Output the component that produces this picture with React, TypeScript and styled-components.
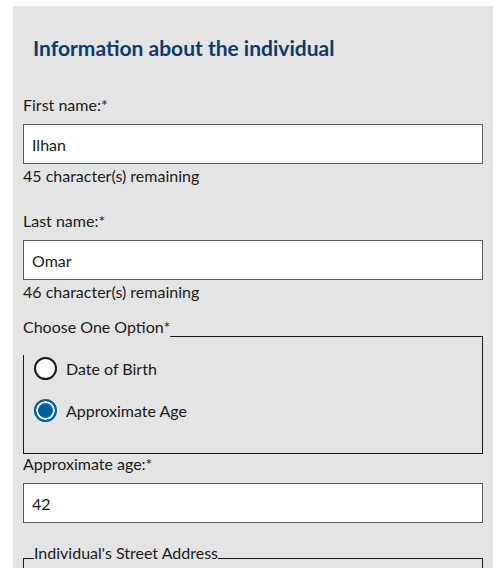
import React from "react";
import styled, { createGlobalStyle } from "styled-components";

const GlobalStyle = createGlobalStyle`
  html, body {
    margin: 0;
    padding: 0;
    background: #ffffff;
    overflow: hidden;
  }
  body {
    font-family: Lato, "Noto Sans", sans-serif;
    color: #1b1b1b;
  }
`;

const Panel = styled.div`
  margin: 6px 10px 0 13px;
  width: 480px;
  background: #e4e4e4;
  padding: 0 10px 40px 10px;
  box-sizing: border-box;
  min-height: 600px;
`;

const Heading = styled.h2`
  margin: 0;
  padding: 28px 0 0 10px;
  font-size: 21px;
  line-height: 28px;
  font-weight: 700;
  color: #0d3b6e;
`;

const Label = styled.label<{ $top: number }>`
  display: block;
  margin-top: ${(p) => p.$top}px;
  font-size: 16px;
  line-height: 20px;
`;

const Input = styled.input`
  display: block;
  box-sizing: border-box;
  width: 100%;
  height: 40px;
  margin: 9px 0 0 0;
  padding: 0 8px;
  border: 1px solid #565c65;
  border-radius: 0;
  background: #ffffff;
  font-family: inherit;
  font-size: 16px;
  color: #1b1b1b;
  outline: none;
`;

const Hint = styled.div`
  margin-top: 2px;
  font-size: 16px;
  line-height: 20px;
`;

const Fieldset = styled.fieldset<{ $top: number }>`
  margin: ${(p) => p.$top}px 0 0 0;
  padding: 0 10px;
  border: 1px solid #1b1b1b;
  min-width: 0;
`;

const Legend = styled.legend<{ $inset: number; $drop: number }>`
  padding: 0 0 ${(p) => p.$drop}px 0;
  margin-left: ${(p) => p.$inset}px;
  font-size: 16px;
  line-height: 20px;
`;

const RadioList = styled.div`
  display: flex;
  flex-direction: column;
  gap: 19px;
  padding: 2px 0 31px 0;
`;

const RadioRow = styled.label`
  display: flex;
  align-items: center;
  gap: 9px;
  font-size: 16px;
  line-height: 23px;
  cursor: pointer;
`;

const RadioDot = styled.span<{ $checked: boolean }>`
  width: 23px;
  height: 23px;
  box-sizing: border-box;
  border-radius: 50%;
  background: ${(p) => (p.$checked ? "#005ea2" : "#ffffff")};
  border: 2px solid ${(p) => (p.$checked ? "#005ea2" : "#1b1b1b")};
  box-shadow: ${(p) => (p.$checked ? "inset 0 0 0 2px #ffffff" : "none")};
  flex-shrink: 0;
`;

const FieldBody = styled.div`
  height: 40px;
`;

export default function App() {
  const [choice, setChoice] = React.useState("age");
  return (
    <>
      <GlobalStyle />
      <Panel>
        <Heading>Information about the individual</Heading>

        <Label $top={33}>First name:*</Label>
        <Input defaultValue="Ilhan" />
        <Hint>45 character(s) remaining</Hint>

        <Label $top={25}>Last name:*</Label>
        <Input defaultValue="Omar" />
        <Hint>46 character(s) remaining</Hint>

        <Fieldset $top={15}>
          <Legend $inset={-11} $drop={18}>
            Choose One Option*
          </Legend>
          <RadioList>
            <RadioRow onClick={() => setChoice("dob")}>
              <RadioDot $checked={choice === "dob"} />
              Date of Birth
            </RadioRow>
            <RadioRow onClick={() => setChoice("age")}>
              <RadioDot $checked={choice === "age"} />
              Approximate Age
            </RadioRow>
          </RadioList>
        </Fieldset>

        <Label $top={0}>Approximate age:*</Label>
        <Input defaultValue="42" />

        <Fieldset $top={20}>
          <Legend $inset={0} $drop={10}>
            Individual's Street Address
          </Legend>
          <FieldBody />
        </Fieldset>
      </Panel>
    </>
  );
}
